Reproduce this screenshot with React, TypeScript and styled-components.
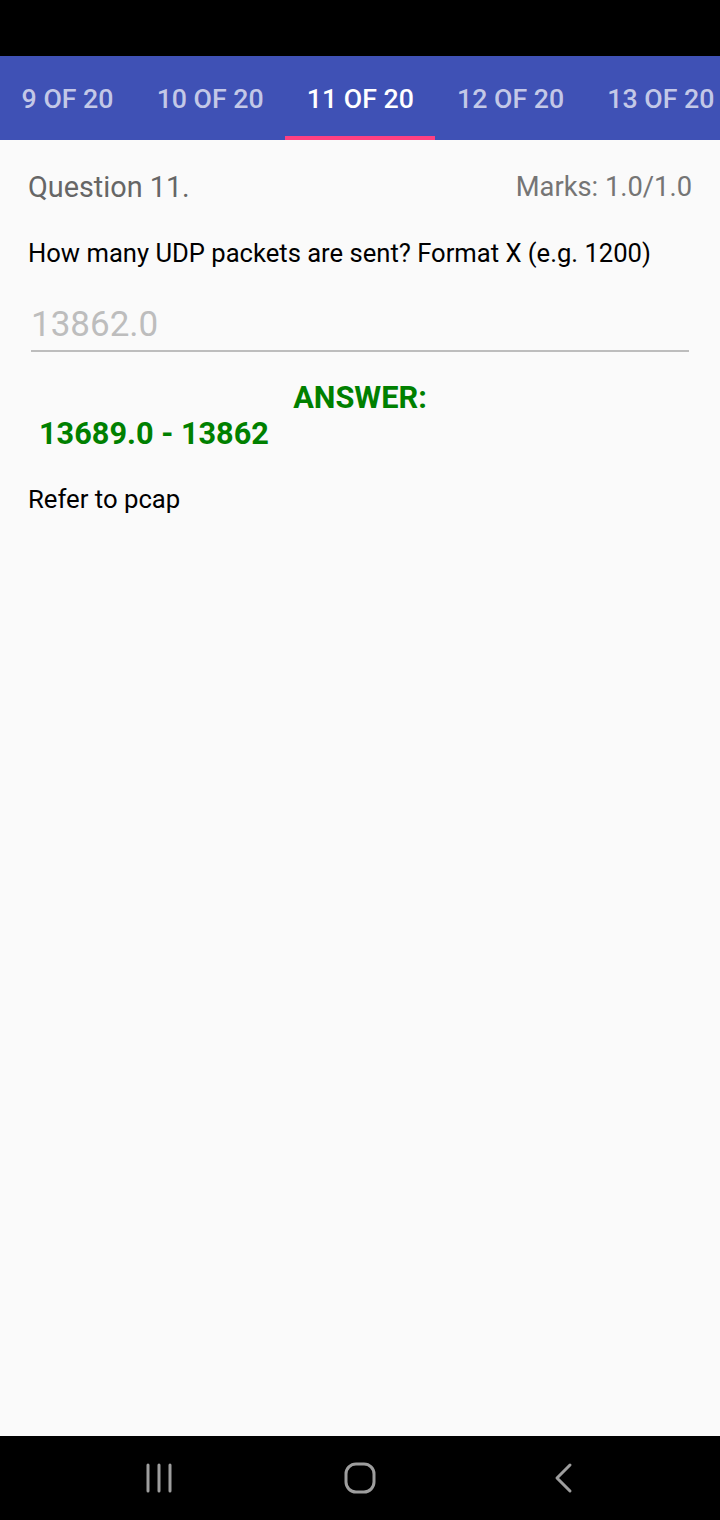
import React from "react";
import styled, { createGlobalStyle } from "styled-components";

const Global = createGlobalStyle`
  html, body { margin: 0; padding: 0; background: #fafafa; }
  body { font-family: Roboto, "Noto Sans", sans-serif; }
  * { box-sizing: border-box; }
`;

const Screen = styled.div`
  width: 720px;
  height: 1520px;
  display: flex;
  flex-direction: column;
  background: #fafafa;
  overflow: hidden;
`;

const StatusBar = styled.div`
  height: 56px;
  background: #000;
  flex: none;
`;

const TabBar = styled.div`
  height: 84px;
  background: #3f51b5;
  display: flex;
  flex: none;
  overflow: hidden;
`;

const Tab = styled.div<{ $active?: boolean }>`
  flex: none;
  position: relative;
  padding: 1px 21.6px 0;
  display: flex;
  align-items: center;
  justify-content: center;
  font-family: Roboto, sans-serif;
  font-weight: 500;
  font-size: 26.7px;
  white-space: nowrap;
  color: ${(p) => (p.$active ? "#ffffff" : "rgba(255,255,255,0.7)")};
  &::after {
    content: "";
    position: absolute;
    left: 0;
    right: 0;
    bottom: 0;
    height: 4px;
    background: ${(p) => (p.$active ? "#ff4081" : "transparent")};
  }
`;

const Content = styled.div`
  flex: 1;
  padding: 0 28px;
  display: flex;
  flex-direction: column;
`;

const HeaderRow = styled.div`
  display: flex;
  justify-content: space-between;
  align-items: center;
  margin-top: 29px;
  height: 36px;
`;

const QuestionTitle = styled.div`
  font-size: 28.8px;
  color: #666666;
`;

const Marks = styled.div`
  font-size: 27.3px;
  color: #757575;
`;

const QuestionText = styled.div`
  margin-top: 32px;
  font-size: 25.6px;
  color: #000;
  line-height: 32px;
`;

const InputWrap = styled.div`
  margin: 37px 3px 0 3px;
  height: 46px;
  border-bottom: 2px solid #bdbdbd;
  display: flex;
  align-items: flex-start;
`;

const InputHint = styled.div`
  font-size: 35px;
  color: #bdbdbd;
  line-height: 38px;
`;

const AnswerLabel = styled.div`
  margin-top: 29px;
  align-self: center;
  font-size: 30.7px;
  font-weight: 700;
  color: #008000;
  line-height: 34px;
`;

const AnswerValue = styled.div`
  margin-left: 11px;
  font-size: 30.7px;
  font-weight: 700;
  color: #008000;
  line-height: 38px;
`;

const Explanation = styled.div`
  margin-top: 30px;
  font-size: 25.7px;
  color: #000;
  line-height: 32px;
`;

const NavBar = styled.div`
  height: 84px;
  background: #000;
  flex: none;
  display: flex;
  align-items: center;
  justify-content: space-around;
  padding: 0 60px;
`;

const NavButton = styled.div`
  width: 80px;
  height: 40px;
  display: flex;
  align-items: center;
  justify-content: center;
`;

const BackButton = styled(NavButton)`
  padding-left: 8px;
`;

const tabs = ["9 OF 20", "10 OF 20", "11 OF 20", "12 OF 20", "13 OF 20"];

export default function App() {
  return (
    <Screen>
      <Global />
      <StatusBar />
      <TabBar>
        {tabs.map((t) => (
          <Tab key={t} $active={t === "11 OF 20"}>
            {t}
          </Tab>
        ))}
      </TabBar>
      <Content>
        <HeaderRow>
          <QuestionTitle>Question 11.</QuestionTitle>
          <Marks>Marks: 1.0/1.0</Marks>
        </HeaderRow>
        <QuestionText>How many UDP packets are sent? Format X (e.g. 1200)</QuestionText>
        <InputWrap>
          <InputHint>13862.0</InputHint>
        </InputWrap>
        <AnswerLabel>ANSWER:</AnswerLabel>
        <AnswerValue>13689.0 - 13862</AnswerValue>
        <Explanation>Refer to pcap</Explanation>
      </Content>
      <NavBar>
        <NavButton>
          <svg width="30" height="30" viewBox="0 0 30 30">
            <g stroke="#9e9e9e" strokeWidth="3" strokeLinecap="round">
              <line x1="3" y1="2" x2="3" y2="28" />
              <line x1="14" y1="2" x2="14" y2="28" />
              <line x1="25" y1="2" x2="25" y2="28" />
            </g>
          </svg>
        </NavButton>
        <NavButton>
          <svg width="32" height="32" viewBox="0 0 32 32">
            <rect x="2" y="2" width="28" height="28" rx="10" fill="none" stroke="#9e9e9e" strokeWidth="3" />
          </svg>
        </NavButton>
        <BackButton>
          <svg width="20" height="32" viewBox="0 0 20 32">
            <polyline points="16,3 3,16 16,29" fill="none" stroke="#9e9e9e" strokeWidth="3" strokeLinecap="round" strokeLinejoin="round" />
          </svg>
        </BackButton>
      </NavBar>
    </Screen>
  );
}
